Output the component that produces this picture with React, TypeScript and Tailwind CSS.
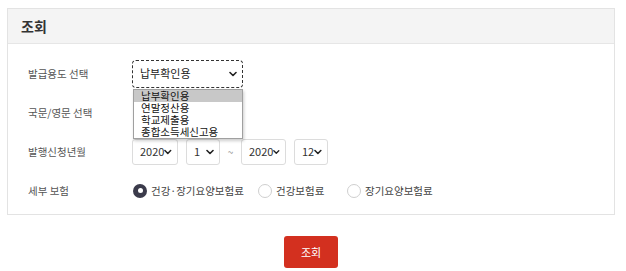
import React from "react";

const font = { fontFamily: '"Noto Sans CJK KR", "Noto Sans", sans-serif' };

function Chevron({ className = "" }: { className?: string }) {
  return (
    <svg width="8" height="6" viewBox="0 0 8 6" className={className}>
      <path d="M1 1.5 L4 4.5 L7 1.5" fill="none" stroke="#222" strokeWidth="1.6" strokeLinecap="round" strokeLinejoin="round" />
    </svg>
  );
}

function SmallSelect({ value, w }: { value: string; w: string }) {
  return (
    <div className={`${w} h-[26px] border border-[#dcdcdc] rounded-[3px] bg-white flex items-center justify-between pl-[7px] pr-[5px] text-[11px] text-[#333]`}>
      <span>{value}</span>
      <Chevron />
    </div>
  );
}

function Radio({ checked, label, w }: { checked?: boolean; label: string; w: string }) {
  return (
    <div className={`${w} flex items-center gap-[4px]`}>
      {checked ? (
        <div className="w-[14px] h-[14px] rounded-full bg-[#3b3b4b] flex items-center justify-center">
          <div className="w-[5px] h-[5px] rounded-full bg-white" />
        </div>
      ) : (
        <div className="w-[14px] h-[14px] rounded-full border border-[#cfcfcf] bg-white" />
      )}
      <span className="text-[10.5px] text-[#444]">{label}</span>
    </div>
  );
}

export default function App() {
  return (
    <div className="w-[626px] h-[271px] bg-white pt-[8px] pl-[7px]" style={font}>
      <div className="w-[608px] border border-[#e3e3e3]">
        <div className="h-[35px] bg-[#f4f4f4] border-b border-[#e6e6e6] flex items-center pl-[13px]">
          <span className="text-[14px] font-bold text-[#333]">조회</span>
        </div>
        <div className="pt-[10px] pb-[4px] pl-[20px]">
          <div className="h-[39px] flex items-center">
            <div className="w-[104px] text-[10.5px] text-[#555]">발급용도 선택</div>
            <div className="relative">
              <div className="w-[111px] h-[28px] border border-dashed border-[#333] rounded-[4px] bg-white flex items-center justify-between pl-[7px] pr-[5px] text-[11px] text-[#222]">
                <span>납부확인용</span>
                <Chevron />
              </div>
              <div className="absolute left-[1px] top-[29px] w-[110px] z-10 bg-white border border-[#a0a0a0] shadow-[1px_2px_3px_rgba(0,0,0,0.2)] text-[10.5px] text-[#111]">
                <div className="bg-[#c8c8c8] pl-[7px] h-[12px] leading-[12px]">납부확인용</div>
                <div className="pl-[7px] h-[12px] leading-[12px]">연말정산용</div>
                <div className="pl-[7px] h-[12px] leading-[12px]">학교제출용</div>
                <div className="pl-[7px] h-[12px] leading-[12px]">종합소득세신고용</div>
              </div>
            </div>
          </div>
          <div className="h-[39px] flex items-center">
            <div className="w-[104px] text-[10.5px] text-[#555]">국문/영문 선택</div>
            <div className="w-[108px] h-[26px] bg-white" />
          </div>
          <div className="h-[39px] flex items-center">
            <div className="w-[104px] text-[10.5px] text-[#555]">발행신청년월</div>
            <div className="flex items-center">
              <SmallSelect value="2020" w="w-[46px]" />
              <div className="w-[8px]" />
              <SmallSelect value="1" w="w-[34px]" />
              <span className="w-[21px] text-center text-[10px] text-[#999]">~</span>
              <SmallSelect value="2020" w="w-[45px]" />
              <div className="w-[8px]" />
              <SmallSelect value="12" w="w-[34px]" />
            </div>
          </div>
          <div className="h-[39px] flex items-center">
            <div className="w-[105px] text-[10.5px] text-[#555]">세부 보험</div>
            <div className="flex items-center">
              <Radio checked label="건강·장기요양보험료" w="w-[125px]" />
              <Radio label="건강보험료" w="w-[89px]" />
              <Radio label="장기요양보험료" w="w-[110px]" />
            </div>
          </div>
        </div>
      </div>
      <div className="w-[608px] flex justify-center mt-[21px]">
        <button className="w-[54px] h-[32px] rounded-[3px] bg-[#d3301f] text-white text-[11px]">조회</button>
      </div>
    </div>
  );
}
